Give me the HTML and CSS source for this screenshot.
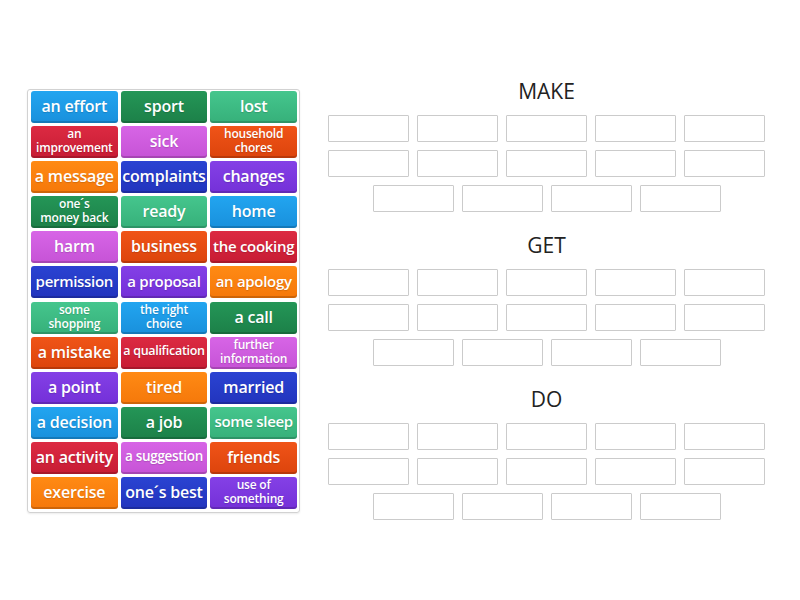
FILE: index.html
```html
<!DOCTYPE html>
<html>
<head>
<meta charset="utf-8">
<link rel="stylesheet" href="styles.css">
</head>
<body>
<div class="page">
  <div class="bank">
    <div class="tile blue">an effort</div>
    <div class="tile dgreen">sport</div>
    <div class="tile lgreen">lost</div>
    <div class="tile red two">an<br>improvement</div>
    <div class="tile pink">sick</div>
    <div class="tile ored two">household<br>chores</div>
    <div class="tile orange">a message</div>
    <div class="tile dblue">complaints</div>
    <div class="tile purple">changes</div>
    <div class="tile dgreen two">one´s<br>money back</div>
    <div class="tile lgreen">ready</div>
    <div class="tile blue">home</div>
    <div class="tile pink">harm</div>
    <div class="tile ored">business</div>
    <div class="tile red md">the cooking</div>
    <div class="tile dblue md">permission</div>
    <div class="tile purple md">a proposal</div>
    <div class="tile orange md">an apology</div>
    <div class="tile lgreen two">some<br>shopping</div>
    <div class="tile blue two">the right<br>choice</div>
    <div class="tile dgreen">a call</div>
    <div class="tile ored">a mistake</div>
    <div class="tile red sm">a qualification</div>
    <div class="tile pink two">further<br>information</div>
    <div class="tile purple">a point</div>
    <div class="tile orange">tired</div>
    <div class="tile dblue">married</div>
    <div class="tile blue">a decision</div>
    <div class="tile dgreen">a job</div>
    <div class="tile lgreen md">some sleep</div>
    <div class="tile red">an activity</div>
    <div class="tile pink sm2">a suggestion</div>
    <div class="tile ored">friends</div>
    <div class="tile orange">exercise</div>
    <div class="tile dblue">one´s best</div>
    <div class="tile purple two">use of<br>something</div>
  </div>
  <div class="groups">
    <div class="group">
      <div class="title">MAKE</div>
      <div class="row"><div class="slot"></div><div class="slot"></div><div class="slot"></div><div class="slot"></div><div class="slot"></div></div>
      <div class="row"><div class="slot"></div><div class="slot"></div><div class="slot"></div><div class="slot"></div><div class="slot"></div></div>
      <div class="row"><div class="slot"></div><div class="slot"></div><div class="slot"></div><div class="slot"></div></div>
    </div>
    <div class="group">
      <div class="title">GET</div>
      <div class="row"><div class="slot"></div><div class="slot"></div><div class="slot"></div><div class="slot"></div><div class="slot"></div></div>
      <div class="row"><div class="slot"></div><div class="slot"></div><div class="slot"></div><div class="slot"></div><div class="slot"></div></div>
      <div class="row"><div class="slot"></div><div class="slot"></div><div class="slot"></div><div class="slot"></div></div>
    </div>
    <div class="group">
      <div class="title">DO</div>
      <div class="row"><div class="slot"></div><div class="slot"></div><div class="slot"></div><div class="slot"></div><div class="slot"></div></div>
      <div class="row"><div class="slot"></div><div class="slot"></div><div class="slot"></div><div class="slot"></div><div class="slot"></div></div>
      <div class="row"><div class="slot"></div><div class="slot"></div><div class="slot"></div><div class="slot"></div></div>
    </div>
  </div>
</div>
</body>
</html>
```

FILE: styles.css
```css
html, body {
  margin: 0;
  padding: 0;
  background: #ffffff;
}
body {
  width: 800px;
  height: 600px;
  overflow: hidden;
  font-family: "Open Sans", "Liberation Sans", sans-serif;
}
.page {
  display: flex;
  align-items: flex-start;
  padding: 89px 0 0 27px;
}
.bank {
  box-sizing: border-box;
  width: 273px;
  display: grid;
  grid-template-columns: repeat(3, 1fr);
  grid-auto-rows: 32px;
  column-gap: 3px;
  row-gap: 3.1px;
  padding: 1px 2px 3px 3px;
  border: 1px solid #d2d2d2;
  border-radius: 3px;
  box-shadow: 0 1px 2px rgba(0,0,0,0.08);
}
.tile {
  box-sizing: border-box;
  display: flex;
  align-items: center;
  justify-content: center;
  text-align: center;
  color: #ffffff;
  font-weight: 600;
  font-size: 16px;
  letter-spacing: -0.2px;
  border-radius: 3px;
  padding-bottom: 2px;
  box-shadow: inset 0 -2px 0 rgba(0,0,0,0.16);
  text-shadow: 0 1px 1px rgba(0,0,0,0.15);
  white-space: nowrap;
  overflow: hidden;
  line-height: 1;
}
.tile.md { font-size: 15px; letter-spacing: -0.3px; }
.tile.sm { font-size: 12.5px; letter-spacing: -0.3px; }
.tile.sm2 { font-size: 13.5px; letter-spacing: -0.3px; }
.tile.two { font-size: 12px; line-height: 14px; letter-spacing: -0.2px; }

.blue   { background: linear-gradient(#22a5f0, #1990dc); }
.dgreen { background: linear-gradient(#249657, #1c8048); }
.lgreen { background: linear-gradient(#45c68d, #36b07a); }
.red    { background: linear-gradient(#dc2a42, #c71c34); }
.pink   { background: linear-gradient(#d765e6, #c653d6); }
.ored   { background: linear-gradient(#f05418, #dc440c); }
.orange { background: linear-gradient(#ff8a14, #f5780a); }
.dblue  { background: linear-gradient(#2a43d2, #2234bd); }
.purple { background: linear-gradient(#8440e6, #7430d8); }

.groups {
  margin-left: 28px;
  margin-top: -10px;
  width: 437px;
  display: flex;
  flex-direction: column;
  gap: 21px;
}
.group {
  display: flex;
  flex-direction: column;
  align-items: center;
  gap: 8px;
}
.title {
  font-family: "Open Sans", "Liberation Sans", sans-serif;
  font-size: 21px;
  line-height: 24px;
  height: 24px;
  color: #222222;
  margin-bottom: 4px;
}
.row {
  display: flex;
  gap: 8px;
}
.slot {
  width: 81px;
  height: 27px;
  box-sizing: border-box;
  border: 1px solid #cbcbcb;
  border-radius: 1px;
}
```
